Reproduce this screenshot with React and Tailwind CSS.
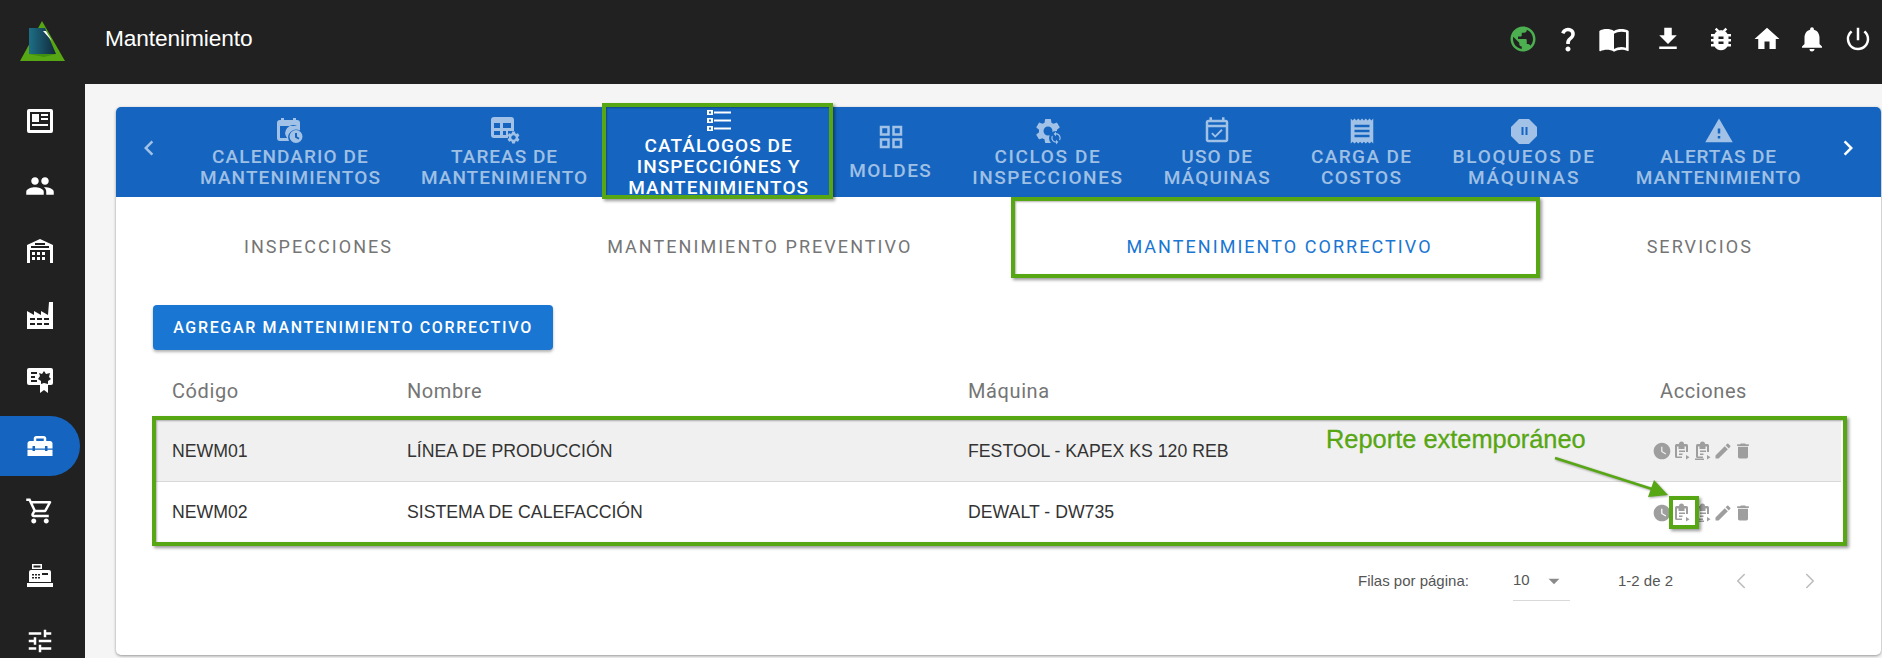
import React from 'react';
import {
  MdPublic, MdQuestionMark, MdImportContacts, MdFileDownload, MdBugReport, MdHome, MdNotifications,
  MdPowerSettingsNew, MdGroup, MdHomeRepairService, MdOutlineShoppingCart, MdTune, MdOutlineGridView,
  MdSettings, MdSync, MdOutlineEventAvailable, MdReceipt, MdWarning, MdChevronLeft, MdChevronRight,
  MdWatchLater, MdEdit, MdDelete, MdArrowDropDown,
} from 'react-icons/md';
import { ChevronLeft, ChevronRight } from 'lucide-react';

const sans = { fontFamily: 'Roboto, sans-serif' };
const arial = { fontFamily: '"Liberation Sans", sans-serif' };

const Logo = () => (
  <svg width="48" height="42" viewBox="0 0 48 42">
    <defs>
      <linearGradient id="lg" x1="0" y1="0" x2="1" y2="0">
        <stop offset="0" stopColor="#1d6f86" />
        <stop offset="1" stopColor="#12283a" />
      </linearGradient>
    </defs>
    <polygon points="23,0 46,40 1,40" fill="#57a614" />
    <polygon points="10,7 26,7 37,33 10,33" fill="url(#lg)" />
    <polygon points="24,10 27,10 33,20" fill="#ffffff" />
    <polygon points="10,33 37,33 25,36" fill="#3f8f10" />
  </svg>
);

const NewsIcon = () => (
  <svg width="26" height="24" viewBox="0 0 26 24" fill="#fff">
    <path fillRule="evenodd" d="M2 0h22a2 2 0 0 1 2 2v20a2 2 0 0 1-2 2H2a2 2 0 0 1-2-2V2a2 2 0 0 1 2-2zm1 3v18h20V3zM5 5h7v8H5zm9 0h7v2h-7zm0 4h7v2h-7zM5 15h16v2H5z" />
  </svg>
);

const WarehouseIcon = () => (
  <svg width="26" height="24" viewBox="0 0 26 24" fill="#fff">
    <path fillRule="evenodd" d="M13 0l13 6v18h-3V11H3v13H0V6zM8 4v2h10V4zM4 7v2h18V7z" />
    <path d="M5 13h3v3H5zm5 0h3v3h-3zm5 0h3v3h-3zM5 18h3v3H5zm5 0h3v3h-3zm5 0h3v3h-3z" />
  </svg>
);

const FactoryIcon = () => (
  <svg width="26" height="27" viewBox="0 0 26 27" fill="#fff">
    <path fillRule="evenodd" d="M22 0h4v27H0V9l7 4V9l7 4V9l7 4zM3 16v2h5v-2zm7 0v2h5v-2zm7 0v2h5v-2zM3 21v2h5v-2zm7 0v2h5v-2zm7 0v2h5v-2z" />
  </svg>
);

const CertIcon = () => (
  <svg width="26" height="25" viewBox="0 0 26 25" fill="#fff">
    <path fillRule="evenodd" d="M2 0h22a2 2 0 0 1 2 2v13a2 2 0 0 1-2 2h-3v8l-4-3-4 3v-8H2a2 2 0 0 1-2-2V2a2 2 0 0 1 2-2zm2 4v2h6V4zm0 4v2h4V8zm0 4v2h6v-2z" />
    <polygon points="17,3 19,6 23,5 22,9 24,11 21,13 21,16 17,15 14,16 14,13 11,11 13,8 12,5 15,6" fill="#212121" />
  </svg>
);

const RegisterIcon = () => (
  <svg width="26" height="23" viewBox="0 0 26 23" fill="#fff">
    <path fillRule="evenodd" d="M5 0h10v5H5zm1.500 1.500v2h7v-2z" />
    <path fillRule="evenodd" d="M4 6h18a2 2 0 0 1 2 2v10H2V8a2 2 0 0 1 2-2zm1 4v1.500h2V10zm3 0v1.500h2V10zm3 0v1.500h2V10zM5 13v1.500h2V13zm3 0v1.500h2V13zm3 0v1.500h2V13zm4-4v2h6V9z" />
    <path d="M0 19h26v4H0z" />
  </svg>
);

const CalendarClock = () => (
  <svg width="30" height="30" viewBox="0 0 30 30" fill="currentColor">
    <path fillRule="evenodd" d="M5 2h3v2h9V2h3v2h1a3 3 0 0 1 3 3v7.500a8 8 0 0 0-11 10.500H4a3 3 0 0 1-3-3V7a3 3 0 0 1 3-3h1zM4 10v12h7a8 8 0 0 1 10-12z" />
    <path fillRule="evenodd" d="M20 14a6.500 6.500 0 1 1 0 13 6.500 6.500 0 0 1 0-13zm-1 3v4.500l3.500 2 1-1.500-2.500-1.500V17z" />
  </svg>
);

const TableGear = () => (
  <span className="relative block w-[30px] h-[30px]">
    <svg width="30" height="30" viewBox="0 0 30 30" fill="currentColor">
      <path fillRule="evenodd" d="M4 1h17a3 3 0 0 1 3 3v11h-6v7H4a3 3 0 0 1-3-3V4a3 3 0 0 1 3-3zm0 6v5h6V7zm9 0v5h8V7zM4 15v4h6v-4zm9 0v4h3v-4z" />
    </svg>
    <MdSettings size={15} className="absolute right-[-1px] bottom-[1px]" />
  </span>
);

const Checklist = () => (
  <svg width="30" height="30" viewBox="0 0 30 30" fill="#fff">
    <path fillRule="evenodd" d="M3 5h6v5H3zm2 1.500v2h2v-2zM3 13h6v5H3zm2 1.500v2h2v-2zM3 21h6v5H3zm2 1.500v2h2v-2z" />
    <path d="M10 6.500h17v2H10zM10 14.500h17v2H10zM10 22.500h17v2H10z" />
  </svg>
);

const GearSync = () => (
  <span className="relative block w-[30px] h-[30px]">
    <MdSettings size={30} />
    <span className="absolute right-[0px] bottom-[1px] rounded-full bg-[#1565c0]">
      <MdSync size={14} />
    </span>
  </span>
);

const OctagonPause = () => (
  <svg width="30" height="30" viewBox="0 0 30 30" fill="currentColor">
    <path fillRule="evenodd" d="M10 3h10l8 8v9l-8 8H10l-8-8v-9zm2.500 8v8h2v-8zm4 0v8h2v-8z" />
  </svg>
);

const ClipPlay = ({ bar }) => (
  <svg width="20" height="20" viewBox="0 0 20 20" fill="currentColor">
    <path fillRule="evenodd" d="M3.500 3h2.500a2.500 2.500 0 0 1 5 0h2.500A1.500 1.500 0 0 1 15 4.500V11h-2V5.500h-1.500V8h-6V5.500H4v10h5v1.500H3.500A1.500 1.500 0 0 1 2 15.500v-11A1.500 1.500 0 0 1 3.500 3z" />
    <path d="M6 9.500h6V11H6zM6 12.500h3.500V14H6z" />
    <path d="M13 14l3.500 2.200L13 18.400z" />
    {bar && <path d="M1 17.500h9V19H1z" />}
  </svg>
);

const tabs = [
  { lines: ['CALENDARIO DE', 'MANTENIMIENTOS'], icon: <CalendarClock />, track: 'tracking-[1.1px]' },
  { lines: ['TAREAS DE', 'MANTENIMIENTO'], icon: <TableGear />, track: 'tracking-[1px]' },
  { lines: ['CATÁLOGOS DE', 'INSPECCIÓNES Y', 'MANTENIMIENTOS'], icon: <Checklist />, active: true, track: 'tracking-[1.1px]' },
  { lines: ['MOLDES'], icon: <MdOutlineGridView size={30} />, gap: true, track: 'tracking-[1.4px]' },
  { lines: ['CICLOS DE', 'INSPECCIONES'], icon: <GearSync />, track: 'tracking-[1.6px]' },
  { lines: ['USO DE', 'MÁQUINAS'], icon: <MdOutlineEventAvailable size={30} />, track: 'tracking-[1.17px]' },
  { lines: ['CARGA DE', 'COSTOS'], icon: <MdReceipt size={30} />, track: 'tracking-[1.4px]' },
  { lines: ['BLOQUEOS DE', 'MÁQUINAS'], icon: <OctagonPause />, track: 'tracking-[1.8px]' },
  { lines: ['ALERTAS DE', 'MANTENIMIENTO'], icon: <MdWarning size={30} />, track: 'tracking-[0.9px]' },
];

const rows = [
  { code: 'NEWM01', name: 'LÍNEA DE PRODUCCIÓN', machine: 'FESTOOL - KAPEX KS 120 REB', shaded: true },
  { code: 'NEWM02', name: 'SISTEMA DE CALEFACCIÓN', machine: 'DEWALT - DW735' },
];

const sideIcons = [
  <NewsIcon />,
  <MdGroup size={30} />,
  <WarehouseIcon />,
  <FactoryIcon />,
  <CertIcon />,
  <MdHomeRepairService size={30} />,
  <MdOutlineShoppingCart size={30} />,
  <RegisterIcon />,
  <MdTune size={30} />,
];

const App = () => {
  return (
    <div className="relative h-screen w-full overflow-hidden flex flex-col bg-[#212121]" style={sans}>
      {/* Header */}
      <header className="h-[84px] shrink-0 flex items-center text-white">
        <div className="w-[85px] shrink-0 flex justify-center">
          <Logo />
        </div>
        <h1 className="ml-[20px] text-[22.7px] leading-none tracking-[-0.1px] flex-1 mb-[7px]" style={arial}>Mantenimiento</h1>
        <div className="flex items-center mb-[7px] pr-[9px]">
          <MdPublic size={30} className="text-[#4caf50] mr-[15px]" />
          <MdQuestionMark size={30} className="mr-[15px]" />
          <MdImportContacts size={32} className="mr-[23px]" />
          <MdFileDownload size={30} className="mr-[23px]" />
          <MdBugReport size={30} className="mr-[16px]" />
          <MdHome size={30} className="mr-[15px]" />
          <MdNotifications size={30} className="mr-[16px]" />
          <MdPowerSettingsNew size={30} />
        </div>
      </header>

      <div className="flex flex-1 min-h-0">
        {/* Sidebar */}
        <aside className="w-[85px] shrink-0 pt-[4px] flex flex-col text-white">
          {sideIcons.map((icon, i) => (
            <div key={i} className="h-[65px] shrink-0 flex items-center">
              <div className={`w-[80px] h-[60px] flex items-center justify-center rounded-r-[30px] ${i === 5 ? 'bg-[#1565c0]' : ''}`}>
                {icon}
              </div>
            </div>
          ))}
        </aside>

        {/* Content */}
        <main className="flex-1 min-w-0 bg-[#f5f5f5] pl-[31px] pr-[1px] pt-[23px] pb-[3px]">
          <div className="h-full bg-white rounded-[5px] shadow-[0_1px_3px_rgba(0,0,0,0.4)] overflow-hidden">
            {/* Main tabs */}
            <div className="h-[90px] bg-[#1565c0] flex items-center pb-[1px]">
              <div className="w-[84px] shrink-0 flex justify-end pr-[36px] mb-[8px] text-white/60">
                <MdChevronLeft size={30} />
              </div>
              <div className="flex gap-[40px] items-center">
                {tabs.map((t) => (
                  <div
                    key={t.lines[0]}
                    className={`flex flex-col items-center whitespace-nowrap text-center text-[19px] leading-[21px] font-medium ${t.track} ${t.active ? 'text-white' : 'text-white/60'}`}
                  >
                    <span className={t.gap ? 'mb-[8px]' : ''}>{t.icon}</span>
                    {t.lines.map((l) => <span key={l}>{l}</span>)}
                  </div>
                ))}
              </div>
              <div className="flex-1 flex justify-center pl-[14px] mb-[8px] text-white">
                <MdChevronRight size={30} />
              </div>
            </div>

            {/* Sub tabs */}
            <div className="h-[99px] flex items-center justify-around px-[21px] text-[18px] tracking-[2.05px] text-[#757575]">
              <span>INSPECCIONES</span>
              <span>MANTENIMIENTO PREVENTIVO</span>
              <span className="text-[#1976d2]">MANTENIMIENTO CORRECTIVO</span>
              <span>SERVICIOS</span>
            </div>

            <div className="mt-[9px] mx-[37px] mr-[40px]">
              <button className="h-[45px] w-[400px] rounded bg-[#1976d2] text-white text-[16px] font-medium tracking-[1.67px] shadow-[0_2px_3px_rgba(0,0,0,0.3)]">
                AGREGAR MANTENIMIENTO CORRECTIVO
              </button>

              {/* Table */}
              <div className="mt-[12px] h-[58px] grid grid-cols-[235px_561px_692px_1fr] items-center pl-[19px] text-[20px] tracking-[0.6px] text-[#757575]">
                <span>Código</span>
                <span>Nombre</span>
                <span>Máquina</span>
                <span>Acciones</span>
              </div>
              <div className="text-[17.7px] text-[#333333]" style={arial}>
                {rows.map((r) => (
                  <div key={r.code} className={`h-[62px] last:h-[61px] pt-[1px] last:pt-0 grid grid-cols-[235px_561px_1fr_auto] items-center pl-[19px] pr-[88px] border-b border-[#d9d9d9] last:border-b-0 ${r.shaded ? 'bg-[#f0f0f0]' : ''}`}>
                    <span>{r.code}</span>
                    <span>{r.name}</span>
                    <span>{r.machine}</span>
                    <span className="flex items-center text-[#9e9e9e]">
                      <MdWatchLater size={20} />
                      <span className="ml-[1px]"><ClipPlay /></span>
                      <span className="ml-[1px]"><ClipPlay bar /></span>
                      <MdEdit size={20} className="ml-[-1px]" />
                      <MdDelete size={20} />
                    </span>
                  </div>
                ))}
              </div>

              {/* Pagination */}
              <div className="mt-[18px] flex items-center text-[15px] text-[#555555] h-[40px]" style={arial}>
                <span className="ml-[1205px] w-[155px]">Filas por página:</span>
                <span className="w-[57px] h-[40px] flex items-center justify-between border-b border-[#d9d9d9] pr-[3px]">
                  10
                  <MdArrowDropDown size={26} className="text-[#8a8a8a]" />
                </span>
                <span className="ml-[48px] w-[110px]">1-2 de 2</span>
                <ChevronLeft size={26} strokeWidth={1.5} className="text-[#bdbdbd]" />
                <ChevronRight size={26} strokeWidth={1.5} className="ml-[43px] text-[#bdbdbd]" />
              </div>
            </div>
          </div>
        </main>
      </div>

      {/* Annotations */}
      <div className="absolute left-[602px] top-[103px] w-[231px] h-[96px] border-[4px] border-[#57a614] shadow-[2px_2px_3px_rgba(0,0,0,0.4),inset_1px_1px_2px_rgba(0,0,0,0.3)]" />
      <div className="absolute left-[1011px] top-[197px] w-[529px] h-[81px] border-[4px] border-[#57a614] shadow-[2px_2px_3px_rgba(0,0,0,0.4),inset_1px_1px_2px_rgba(0,0,0,0.3)]" />
      <div className="absolute left-[152px] top-[416px] w-[1695px] h-[130px] border-[4px] border-[#57a614] shadow-[2px_2px_3px_rgba(0,0,0,0.4),inset_1px_1px_2px_rgba(0,0,0,0.3)]" />
      <div className="absolute left-[1669px] top-[496px] w-[30px] h-[33px] border-[4px] border-[#57a614] shadow-[2px_2px_3px_rgba(0,0,0,0.4)]" />
      <span className="absolute left-[1326px] top-[424px] text-[25.4px] leading-[30px] text-[#57a614] whitespace-nowrap" style={{ ...arial, WebkitTextStroke: '0.3px #57a614' }}>
        Reporte extemporáneo
      </span>
      <svg className="absolute left-[1550px] top-[454px] drop-shadow-[1px_1px_1px_rgba(0,0,0,0.35)]" width="125" height="46" viewBox="0 0 125 46">
        <line x1="5" y1="4" x2="102" y2="35" stroke="#57a614" strokeWidth="2.500" />
        <polygon points="118,41 98,43 104,26" fill="#57a614" />
      </svg>
    </div>
  );
};

export default App;
